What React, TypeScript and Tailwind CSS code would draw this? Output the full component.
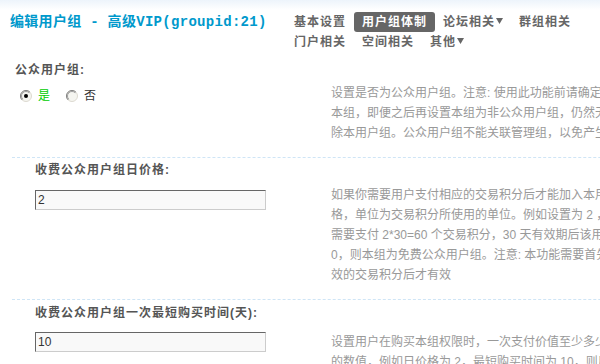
import React from "react";

const font = {
  fontFamily: '"Liberation Sans", "Noto Sans CJK SC", sans-serif',
};

const Caret = () => (
  <svg width="7" height="6" viewBox="0 0 7 6" className="ml-[1px] mb-[2px] inline-block">
    <polygon points="0,0 7,0 3.5,6" fill="#666" />
  </svg>
);

const NavItem = ({ label, active = false, caret = false }: { label: string; active?: boolean; caret?: boolean }) => (
  <div
    className={`flex items-center h-[20px] px-2 rounded-[3px] text-[12px] font-bold tracking-[1px] leading-[20px] ${
      active ? "bg-[#666] text-white" : "text-[#666]"
    }`}
  >
    {label}
    {caret && <Caret />}
  </div>
);

const Radio = ({ checked }: { checked: boolean }) => (
  <svg width="12" height="12" viewBox="0 0 12 12">
    <circle cx="6" cy="6" r="5.5" fill="#f5f5f0" stroke="#dcd9d0" />
    <path d="M2.1 9.9 A5.5 5.5 0 0 1 9.9 2.1" stroke="#808080" fill="none" />
    <path d="M2.8 9.2 A4.5 4.5 0 0 1 9.2 2.8" stroke="#a0a0a0" fill="none" />
    {checked && <circle cx="6" cy="6" r="2" fill="#000" />}
  </svg>
);

const Field = ({ value }: { value: string }) => (
  <input
    readOnly
    value={value}
    className="block w-[231px] h-[20px] px-[2px] text-[12px] text-[#333] bg-[#f9f9f9] border border-t-[#666] border-l-[#666] border-b-[#ccc] border-r-[#ccc] outline-none"
    style={font}
  />
);

const Tips = ({ lines }: { lines: string[] }) => (
  <div className="text-[12px] leading-[20px] text-[#999] whitespace-nowrap">
    {lines.map((l, i) => (
      <div key={i}>{l}</div>
    ))}
  </div>
);

export default function App() {
  return (
    <div
      className="w-[600px] h-[364px] overflow-hidden bg-[linear-gradient(to_bottom,#edf4fb,#ffffff_10px)]"
      style={font}
    >
      {/* header */}
      <div className="flex pt-[12px]">
        <div
          className="w-[286px] shrink-0 pl-[10px] text-[14px] leading-[20px] font-bold tracking-[0.3px] text-[#0099cc] whitespace-nowrap"
          style={{ fontFamily: '"Liberation Mono", "Noto Sans CJK SC", monospace' }}
        >
          编辑用户组 - 高级VIP(groupid:21)
        </div>
        <div className="flex flex-col">
          <div className="flex">
            <NavItem label="基本设置" />
            <NavItem label="用户组体制" active />
            <NavItem label="论坛相关" caret />
            <NavItem label="群组相关" />
          </div>
          <div className="flex">
            <NavItem label="门户相关" />
            <NavItem label="空间相关" />
            <NavItem label="其他" caret />
          </div>
        </div>
      </div>

      <div className="ml-[12px] w-[900px]">
        {/* 公众用户组 */}
        <div className="border-b border-dashed border-[#cfe5f6]">
          <div className="mt-[8px] pl-[3px] text-[12px] leading-[20px] font-bold tracking-[1px] text-[#555]">
            公众用户组:
          </div>
          <div className="flex mt-[3px] pb-[14px]">
            <div className="w-[319px] shrink-0 pt-[3px] pl-[8px]">
              <div className="flex items-center h-[20px] text-[12px]">
                <Radio checked />
                <span className="ml-[6px] text-[#00cc00]">是</span>
                <span className="ml-[16px]">
                  <Radio checked={false} />
                </span>
                <span className="ml-[6px] text-[#333]">否</span>
              </div>
            </div>
            <Tips
              lines={[
                "设置是否为公众用户组。注意: 使用此功能前请确定您已了解公众用户组的作用，",
                "本组，即便之后再设置本组为非公众用户组，仍然无法自动删除已加入的用户，需要手动删",
                "除本用户组。公众用户组不能关联管理组，以免产生安全问题",
              ]}
            />
          </div>
        </div>

        {/* 日价格 */}
        <div className="border-b border-dashed border-[#cfe5f6]">
          <div className="mt-[2px] pl-[23px] text-[12px] leading-[20px] font-bold tracking-[1px] text-[#555]">
            收费公众用户组日价格:
          </div>
          <div className="flex mt-[5px] pb-[14px]">
            <div className="w-[319px] shrink-0 pt-[5px] pl-[23px]">
              <Field value="2" />
            </div>
            <Tips
              lines={[
                "如果你需要用户支付相应的交易积分后才能加入本用户组，请在此设置本用户组的日价",
                "格，单位为交易积分所使用的单位。例如设置为 2 ，则用户加入本组 30 天",
                "需要支付 2*30=60 个交易积分，30 天有效期后该用户将被自动移出本组。设置为",
                "0，则本组为免费公众用户组。注意: 本功能需要首先开启交易积分，并设置有",
                "效的交易积分后才有效",
              ]}
            />
          </div>
        </div>

        {/* 最短购买时间 */}
        <div>
          <div className="mt-[3px] pl-[23px] text-[12px] leading-[20px] font-bold tracking-[1px] text-[#555]">
            收费公众用户组一次最短购买时间(天):
          </div>
          <div className="flex mt-[9px]">
            <div className="w-[319px] shrink-0 pl-[23px]">
              <Field value="10" />
            </div>
            <Tips
              lines={[
                "设置用户在购买本组权限时，一次支付价值至少多少天的交易积分，即最短购买时间",
                "的数值，例如日价格为 2，最短购买时间为 10，则用户一次至少支付 20 个交易积分",
              ]}
            />
          </div>
        </div>
      </div>
    </div>
  );
}
